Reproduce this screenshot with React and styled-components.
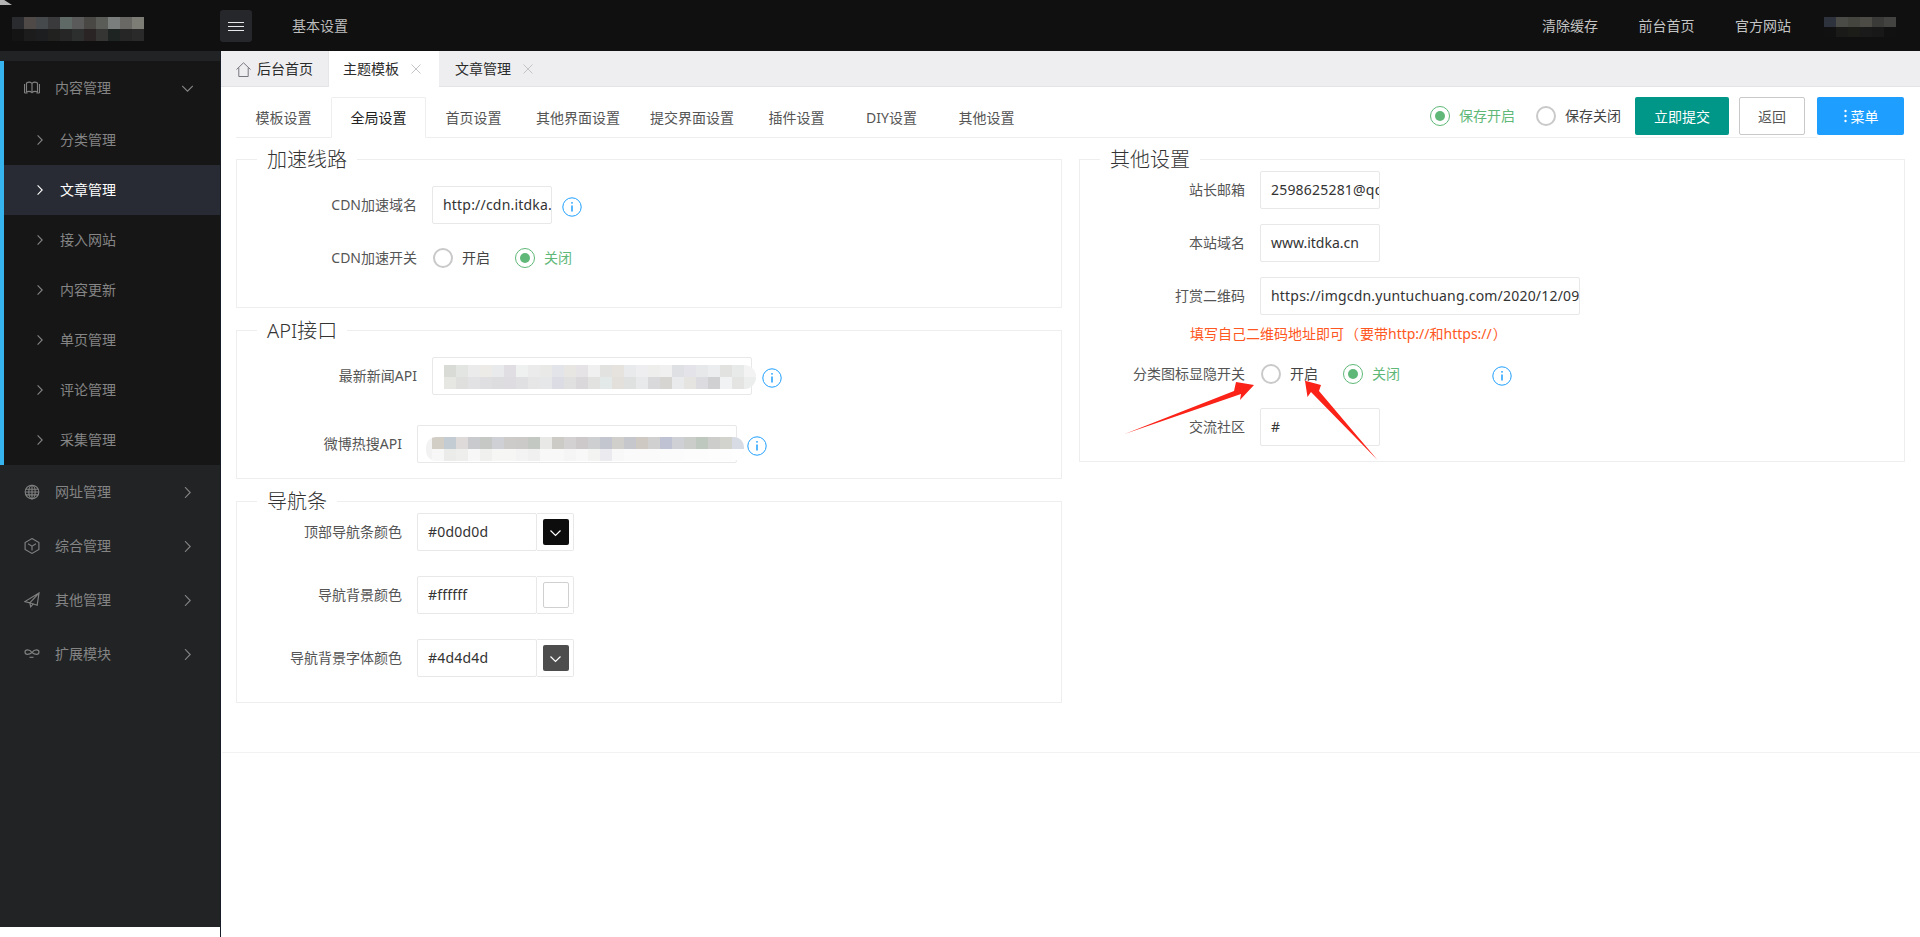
import React from "react";
import styled, { createGlobalStyle } from "styled-components";

const Global = createGlobalStyle`
  html, body { margin: 0; padding: 0; background: #fff; }
  body { font-family: "Noto Sans", "Noto Sans CJK SC", "Liberation Sans", sans-serif; font-size: 14px; color: #555; overflow: hidden; }
  * { box-sizing: border-box; }
`;

const Page = styled.div`position: relative; width: 1920px; height: 937px; overflow: hidden; background: #fff;`;

/* ---- top bar ---- */
const TopBar = styled.header`display: flex; align-items: center; height: 51px; background: #101010; color: #bdbdbd; position: relative;`;
const CornerSliver = styled.span`
  position: absolute; left: 0; top: 0; width: 12px; height: 5px; background: #b4b4b4;
  clip-path: polygon(0 0, 35% 0, 100% 100%, 0 100%);
`;
const LogoSlot = styled.div`width: 220px; height: 51px; padding: 17px 0 0 12px; flex: none;`;
const MenuToggle = styled.button`
  width: 32px; height: 32px; margin-top: 1px; padding: 0; flex: none; border: 0; border-radius: 3px; background: #26272a;
  display: flex; flex-direction: column; align-items: center; justify-content: center; gap: 3px;
`;
const ToggleLine = styled.i`display: block; width: 16px; height: 1px; background: #e8e8e8;`;
const TopTitle = styled.div`margin-left: 40px; line-height: 20px; flex: 1;`;
const TopLinks = styled.nav`display: flex; gap: 40.5px; line-height: 20px; color: #c4c4c4;`;
const UserSlot = styled.div`height: 51px; padding-top: 17px; margin: 0 24px 0 33px;`;

/* ---- pixelated patches ---- */
const Mosaic = styled.div`display: grid; grid-template-columns: repeat(${p => p.$cols}, 12px); grid-auto-rows: ${p => p.$rowH || 12}px;`;
const MosaicCell = styled.span`display: block;`;
const Pixels = ({ colors, cols, rowH }) => (
  <Mosaic $cols={cols} $rowH={rowH}>
    {colors.map((c, i) => <MosaicCell key={i} style={{ background: c }} />)}
  </Mosaic>
);
const LOGO = ["#2a2b2e","#4f4a48","#45494c","#3a3a3d","#5f6a66","#5a5a5a","#4a4845","#5a5c58","#7a7e7c","#696865","#7d7d76",
  "#141414","#1c1c1c","#1d1e1f","#212120","#272626","#2d2f2e","#2a2524","#353533","#1e2422","#262626","#292a29"];
const USER = ["#2e323c","#4a4b46","#45453f","#4c4b46","#3a3a38","#434341",
  "#111111","#1a1b19","#1c1c19","#1a1a1a","#181818","#111111"];
const API_A = ["#d9dbd6","#e3e5e2","#ebebec","#edebe8","#e9eaec","#e0dee2","#eff1f1","#ebebeb","#e9e9e8","#e3e4ea","#e7e6e3","#e5e3e6","#f0f0f0","#e2e2e0","#e6e3df","#e9eaec","#eeeef0","#eeeeec","#f0f0f0","#dfe0e4","#e4e3ea","#e7e8ea","#ecedef","#e2e2e0","#e8e9e9","#f3f3f4",
  "#e6e7e2","#dfe0de","#e2e2e4","#dfdfe1","#dddde0","#dedce0","#e0e0e2","#e6e6e6","#e6e7e8","#dcdde4","#e0e0e0","#dbd8db","#e2e2e0","#e3e8e8","#e3e0db","#dee1df","#e8e9eb","#d9d9db","#d6d5d2","#e8eaec","#e5e4e0","#dcdce0","#d0d0d2","#f0f2f3","#e4e4e2","#eceeee"];
const API_B = ["#d2cec6","#c4ccd3","#dedad9","#c9cace","#c5c8c4","#cfd0d6","#cdcbca","#cbcac8","#c4c8c2","#e8e8e6","#cccbc5","#d3d1d1","#cdc9ca","#cdcfd1","#c3c6cf","#d0cfcc","#c6c7cd","#cfc9c4","#cfd0cf","#bfc2d3","#cfd0d6","#cacdca","#bfc8bf","#cdcdcb","#d3d3cd","#d7dbe4",
  "#f7f7f7","#ebebea","#eeeeec","#f7f7f7","#f0f0ef","#f6f6f5","#f6f6f4","#f3f3f3","#eff0ef","#f8f8f8","#f8f8f8","#f5f5f5","#f8f8f8","#f3f3f1","#ebebef","#f8f8f8","#fafafa","#fafafa","#fafafa","#fbfbfb","#fbfbfb","#fcfcfc","#fcfcfc","#fdfdfd","#fdfdfd","#fefefe"];

/* ---- body layout ---- */
const Body = styled.div`display: flex; height: 886px;`;
const SideColumn = styled.aside`width: 221px; flex: none; border-right: 1px solid #161d24; height: 886px;`;
const SideInner = styled.div`height: 876px; background: #212325; padding-top: 10px;`;
const OpenGroup = styled.div`border-left: 4px solid #36b4ee; background: #161616;`;
const NavHead = styled.div`
  display: flex; align-items: center; height: 54px; padding: 0 27px 0 ${p => (p.$open ? 20 : 24)}px; color: #848484; line-height: 20px;
`;
const NavIcon = styled.svg`width: 16px; height: 16px; flex: none; margin-right: 15px; fill: none; stroke: #808080; stroke-width: 1.15;`;
const NavLabel = styled.span`flex: 1;`;
const NavChild = styled.div`
  display: flex; align-items: center; height: 50px; padding-left: 33px; line-height: 20px;
  color: ${p => (p.$active ? "#ffffff" : "#858585")};
  background: ${p => (p.$active ? "#282b33" : "transparent")};
`;
const ChevSvg = styled.svg`flex: none; fill: none; stroke: ${p => p.$c || "#858585"}; stroke-width: 1.1;`;
const ChildChev = styled(ChevSvg)`width: 6px; height: 10px; margin-right: 17px;`;
const HeadChev = styled(ChevSvg)`width: 11px; height: 11px;`;

const Main = styled.main`flex: 1; min-width: 0;`;
const TabStrip = styled.div`display: flex; height: 36px; background: #eeeef1; border-bottom: 1px solid #e4e4e6;`;
const StripTab = styled.div`
  display: flex; align-items: center; height: 36px; padding: ${p => p.$pad || "0 15px"}; margin-right: ${p => p.$mr || 0}px;
  background: ${p => (p.$active ? "#fff" : "transparent")}; color: #2b2b2b; line-height: 20px;
  border-left: ${p => (p.$active ? "1px solid #e6e6e8" : "0")};
`;
const HomeIcon = styled.svg`width: 15px; height: 15px; margin-right: 6px; fill: none; stroke: #77777f; stroke-width: 1;`;
const CloseIcon = styled.svg`width: 10px; height: 10px; margin-left: 12px; fill: none; stroke: #c4c4c8; stroke-width: 1;`;

const Content = styled.div`padding: 10px 15px 0;`;
const TabRow = styled.div`display: flex; align-items: flex-start;`;
const TabBar = styled.div`
  flex: 1; display: flex; align-items: flex-start; height: 41px; border-bottom: 1px solid #eeeeee; padding-right: 12px;
`;
const FormTab = styled.div`
  min-width: 95px; height: 41px; padding: 0 14px; display: flex; align-items: center; justify-content: center; line-height: 20px;
  color: ${p => (p.$active ? "#222" : "#555")};
  border: 1px solid ${p => (p.$active ? "#eeeeee" : "transparent")};
  border-bottom: 1px solid ${p => (p.$active ? "#fff" : "transparent")};
  background: ${p => (p.$active ? "#fff" : "transparent")};
  border-radius: 2px 2px 0 0;
`;
const Spacer = styled.div`flex: 1;`;
const HeadRadios = styled.div`display: flex; align-items: center; height: 38px;`;
const Btn = styled.div`
  height: 38px; padding: 0 18px; display: flex; align-items: center; justify-content: center; gap: 2px; border-radius: 2px; flex: none;
  background: ${p => p.$bg || "#fff"}; color: ${p => p.$c || "#fff"};
  border: 1px solid ${p => p.$bd || "transparent"}; margin-left: ${p => p.$ml || 0}px;
`;
const DotsIcon = styled.svg`width: 6px; height: 14px; fill: #fff;`;
const MenuBtn = styled(Btn)`width: 87px; margin-right: 1px; padding: 0;`;

const Grid = styled.div`display: grid; grid-template-columns: 826px 826px; column-gap: 17px; margin-top: 9px; align-items: start;`;
const Stack = styled.div`display: flex; flex-direction: column; gap: 10px;`;
const Field = styled.fieldset`
  margin: 0; min-width: 0; border: 1px solid #eeeeee; padding: ${p => p.$top || 0}px 0 ${p => p.$bottom || 0}px;
  display: block;
`;
const Legend = styled.legend`
  margin-left: 20px; padding: 0 10px; font-size: 20px; line-height: 25px; height: 25px; color: #333; font-weight: 300;
`;
const Rows = styled.div`display: flex; flex-direction: column; gap: ${p => p.$gap}px; margin-top: ${p => p.$mt || 0}px;`;
const Row = styled.div`display: flex; align-items: center; min-height: 38px;`;
const Label = styled.div`
  width: ${p => p.$w}px; flex: none; padding-right: 15px; text-align: right; line-height: 20px; color: #555; white-space: nowrap;
`;
const Input = styled.div`
  position: relative; width: ${p => p.$w}px; height: 38px; flex: none; padding-left: 10px; line-height: 36px; color: #333;
  letter-spacing: ${p => (p.$tight ? 0 : 0.2)}px;
  background: #fff; border: 1px solid #e8e8e8; border-radius: 2px; white-space: nowrap; overflow: ${p => (p.$open ? "visible" : "hidden")};
`;
const Smear = styled.div`
  position: absolute; left: ${p => p.$l}px; top: ${p => p.$t}px; border-radius: ${p => p.$r || "0 12px 12px 0"}; overflow: hidden;
  background: #f2f2f3; padding-left: ${p => p.$pad || 0}px;
`;
const Info = styled.svg`width: 20px; height: 20px; flex: none; margin: 4px 0 0 ${p => p.$ml || 10}px; fill: none; stroke: #1e9fff; stroke-width: 1;`;

const Swatch = styled.div`
  width: 37px; height: 38px; flex: none; border: 1px solid #e8e8e8; border-left: 0; border-radius: 0 2px 2px 0;
  display: flex; align-items: center; justify-content: center; padding-left: 1px;
`;
const SwatchFace = styled.div`
  width: 26px; height: 26px; border-radius: 2px; background: ${p => p.$c};
  border: ${p => (p.$light ? "1px solid #d0d0d0" : "0")};
  display: flex; align-items: center; justify-content: center;
`;
const SwatchChev = styled.svg`width: 13px; height: 13px; fill: none; stroke: #fff; stroke-width: 1.2;`;

const RadioWrap = styled.div`display: flex; align-items: center; margin-left: ${p => p.$ml || 0}px; line-height: 20px; color: ${p => (p.$on ? "#5FB878" : "#444")};`;
const RadioDot = styled.span`
  width: 20px; height: 20px; flex: none; border-radius: 50%; margin-right: 9px; display: flex; align-items: center; justify-content: center;
  border: ${p => (p.$on ? "1.5px solid #5FB878" : "2px solid #c9c9c9")};
  &::after { content: ""; width: 10px; height: 10px; border-radius: 50%; background: ${p => (p.$on ? "#5FB878" : "transparent")}; }
`;
const Radio = ({ on, ml, children }) => (
  <RadioWrap $on={on} $ml={ml}><RadioDot $on={on} />{children}</RadioWrap>
);
const Hint = styled.div`color: #FF5722; line-height: 20px; margin: 8px 0 11px 110px;`;
const Paren = styled.span`font-family: "Noto Sans CJK TC", sans-serif; padding: 0 1px;`;
const BottomLine = styled.div`margin: 49px 0 0 1px; border-top: 1px solid #f2f2f2;`;
const Arrows = styled.svg`position: absolute; left: 1120px; top: 375px; width: 262px; height: 90px; fill: #fb2218; pointer-events: none;`;

/* ---- icons ---- */
const InfoI = ({ ml }) => (
  <Info $ml={ml} viewBox="0 0 20 20">
    <circle cx="10" cy="10" r="9.2" />
    <path d="M10 8.6v6" strokeWidth="1.5" />
    <circle cx="10" cy="5.8" r=".9" fill="#1e9fff" stroke="none" />
  </Info>
);
const Right = () => <ChildChev viewBox="0 0 6 10"><path d="M.6.4 5.2 5 .6 9.6" /></ChildChev>;
const ActiveRight = () => <ChildChev $c="#fff" viewBox="0 0 6 10"><path d="M.6.4 5.2 5 .6 9.6" /></ChildChev>;
const HeadRight = () => <HeadChev viewBox="0 0 11 11"><path d="M3 .2 8.2 5.5 3 10.8" /></HeadChev>;
const Down = () => <HeadChev viewBox="0 0 11 11"><path d="M.2 3 5.5 8.2 10.8 3" /></HeadChev>;
const SwChev = () => <SwatchChev viewBox="0 0 13 13"><path d="M1.500 4.500l5 5 5-5" /></SwatchChev>;

const BookIcon = () => (
  <NavIcon viewBox="0 0 16 16">
    <path d="M.5 13V4M15.5 13V4" />
    <path d="M2.5 12V3c2-1.2 4-1 5.5.4C9.5 2 11.500 1.800 13.500 3v9c-2-1-4-.8-5.500.6C6.500 11.200 4.500 11 2.500 12z" />
    <path d="M8 3.400v9.200M.5 13h3M12.500 13h3" />
  </NavIcon>
);
const GlobeIcon = () => (
  <NavIcon viewBox="0 0 16 16">
    <circle cx="8" cy="8" r="6.800" />
    <ellipse cx="8" cy="8" rx="3.200" ry="6.800" />
    <path d="M8 1.200v13.600M1.800 5.200h12.400M1.800 10.800h12.400M1.200 8h13.600" />
  </NavIcon>
);
const CubeIcon = () => (
  <NavIcon viewBox="0 0 16 16">
    <path d="M8 .6l6.900 3.900v7L8 15.400 1.100 11.500v-7z" />
    <path d="M4 5.800 8 8.200l4-2.400M8 8.200v4.300" />
  </NavIcon>
);
const PlaneIcon = () => (
  <NavIcon viewBox="0 0 16 16">
    <path d="M15 1 .8 9.600l5 1.200L15 1l-1.800 12.200-7.400-2.400.9 4 2.300-2.600" />
  </NavIcon>
);
const LoopIcon = () => (
  <NavIcon viewBox="0 0 16 16">
    <path d="M8 6.500C6.800 4.600 4.900 3.800 3.400 3.800 2 3.800 1 4.800 1 6.100s1 2.300 2.400 2.300c1.500 0 3.400-.8 4.600-1.900 1.200-1.900 3.100-2.700 4.600-2.700C14 3.800 15 4.800 15 6.100s-1 2.300-2.400 2.300c-1.500 0-3.400-.8-4.600-1.900" />
    <path d="M5.500 11.300h4" />
  </NavIcon>
);

const children = ["分类管理", "文章管理", "接入网站", "内容更新", "单页管理", "评论管理", "采集管理"];
const closed = [
  ["网址管理", GlobeIcon], ["综合管理", CubeIcon], ["其他管理", PlaneIcon], ["扩展模块", LoopIcon],
];
const formTabs = ["模板设置", "全局设置", "首页设置", "其他界面设置", "提交界面设置", "插件设置", "DIY设置", "其他设置"];
const colors = [
  ["顶部导航条颜色", "#0d0d0d"], ["导航背景颜色", "#ffffff"], ["导航背景字体颜色", "#4d4d4d"],
];

export default function App() {
  return (
    <Page>
      <Global />
      <TopBar>
        <CornerSliver />
        <LogoSlot><Pixels colors={LOGO} cols={11} /></LogoSlot>
        <MenuToggle aria-label="menu"><ToggleLine /><ToggleLine /><ToggleLine /></MenuToggle>
        <TopTitle>基本设置</TopTitle>
        <TopLinks><span>清除缓存</span><span>前台首页</span><span>官方网站</span></TopLinks>
        <UserSlot><Pixels colors={USER} cols={6} rowH={10} /></UserSlot>
      </TopBar>
      <Body>
        <SideColumn>
          <SideInner>
            <OpenGroup>
              <NavHead $open><BookIcon /><NavLabel>内容管理</NavLabel><Down /></NavHead>
              {children.map((c) => (
                <NavChild key={c} $active={c === "文章管理"}>
                  {c === "文章管理" ? <ActiveRight /> : <Right />}{c}
                </NavChild>
              ))}
            </OpenGroup>
            {closed.map(([t, Ico]) => (
              <NavHead key={t}><Ico /><NavLabel>{t}</NavLabel><HeadRight /></NavHead>
            ))}
          </SideInner>
        </SideColumn>
        <Main>
          <TabStrip>
            <StripTab><HomeIcon viewBox="0 0 15 15"><path d="M.5 7.500 7.500.8l7 6.700M2.800 5.800v8.700h9.400V5.800" /></HomeIcon>后台首页</StripTab>
            <StripTab $active $pad="0 18px 0 14px" $mr={1}>主题模板<CloseIcon viewBox="0 0 10 10"><path d="M.5.5l9 9M9.500.5l-9 9" /></CloseIcon></StripTab>
            <StripTab $pad="0 20px 0 15px">文章管理<CloseIcon viewBox="0 0 10 10"><path d="M.5.5l9 9M9.500.5l-9 9" /></CloseIcon></StripTab>
          </TabStrip>
          <Content>
            <TabRow>
              <TabBar>
                {formTabs.map((t) => <FormTab key={t} $active={t === "全局设置"}>{t}</FormTab>)}
                <Spacer />
                <HeadRadios>
                  <Radio on>保存开启</Radio>
                  <Radio ml={21}>保存关闭</Radio>
                </HeadRadios>
                <Btn $bg="#009688" $ml={14}>立即提交</Btn>
                <Btn $bg="#fff" $c="#555" $bd="#c9c9c9" $ml={10}>返回</Btn>
              </TabBar>
              <MenuBtn $bg="#1e9fff">
                <DotsIcon viewBox="0 0 6 14"><circle cx="2.500" cy="2" r="1.200" /><circle cx="2.500" cy="7" r="1.200" /><circle cx="2.500" cy="12" r="1.200" /></DotsIcon>
                菜单
              </MenuBtn>
            </TabRow>
            <Grid>
              <Stack>
                <Field $top={14} $bottom={30}>
                  <Legend>加速线路</Legend>
                  <Rows $gap={15}>
                    <Row>
                      <Label $w={195}>CDN加速域名</Label>
                      <Input $w={120}>http://cdn.itdka.</Input>
                      <InfoI />
                    </Row>
                    <Row>
                      <Label $w={195}>CDN加速开关</Label>
                      <Radio ml={1}>开启</Radio>
                      <Radio on ml={25}>关闭</Radio>
                    </Row>
                  </Rows>
                </Field>
                <Field $top={14} $bottom={15}>
                  <Legend>API接口</Legend>
                  <Rows $gap={30}>
                    <Row>
                      <Label $w={195}>最新新闻API</Label>
                      <Input $w={320} $open>
                        <Smear $l={11} $t={7}><Pixels colors={API_A} cols={26} /></Smear>
                      </Input>
                      <InfoI />
                    </Row>
                    <Row>
                      <Label $w={180}>微博热搜API</Label>
                      <Input $w={320} $open>
                        <Smear $l={8} $t={11} $pad={6} $r="10px"><Pixels colors={API_B} cols={26} /></Smear>
                      </Input>
                      <InfoI />
                    </Row>
                  </Rows>
                </Field>
                <Field $bottom={25}>
                  <Legend>导航条</Legend>
                  <Rows $gap={25} $mt={-1}>
                    {colors.map(([l, c]) => (
                      <Row key={l}>
                        <Label $w={180}>{l}</Label>
                        <Input $w={120}>{c}</Input>
                        <Swatch>
                          <SwatchFace $c={c} $light={c === "#ffffff"}>{c !== "#ffffff" && <SwChev />}</SwatchFace>
                        </Swatch>
                      </Row>
                    ))}
                  </Rows>
                </Field>
              </Stack>
              <Field $bottom={15}>
                <Legend>其他设置</Legend>
                <Rows $gap={15} $mt={-1}>
                  <Row><Label $w={180}>站长邮箱</Label><Input $w={120}>2598625281@qq</Input></Row>
                  <Row><Label $w={180}>本站域名</Label><Input $w={120} $tight>www.itdka.cn</Input></Row>
                  <Row><Label $w={180}>打赏二维码</Label><Input $w={320}>https://imgcdn.yuntuchuang.com/2020/12/09</Input></Row>
                </Rows>
                <Hint>填写自己二维码地址即可<Paren>（</Paren>要带http://和https://<Paren>）</Paren></Hint>
                <Rows $gap={15}>
                  <Row>
                    <Label $w={180}>分类图标显隐开关</Label>
                    <Radio ml={1}>开启</Radio>
                    <Radio on ml={25}>关闭</Radio>
                    <InfoI ml={92} />
                  </Row>
                  <Row><Label $w={180}>交流社区</Label><Input $w={120}>#</Input></Row>
                </Rows>
              </Field>
            </Grid>
          </Content>
          <BottomLine />
        </Main>
      </Body>
      <Arrows viewBox="1120 375 262 90">
        <polygon points="1124.600,434 1234,391 1236,382 1254,385 1240,400 1241,394" />
        <polygon points="1377.500,460 1319,391 1321,385 1305,380.700 1307.500,397 1311,392" />
      </Arrows>
    </Page>
  );
}
